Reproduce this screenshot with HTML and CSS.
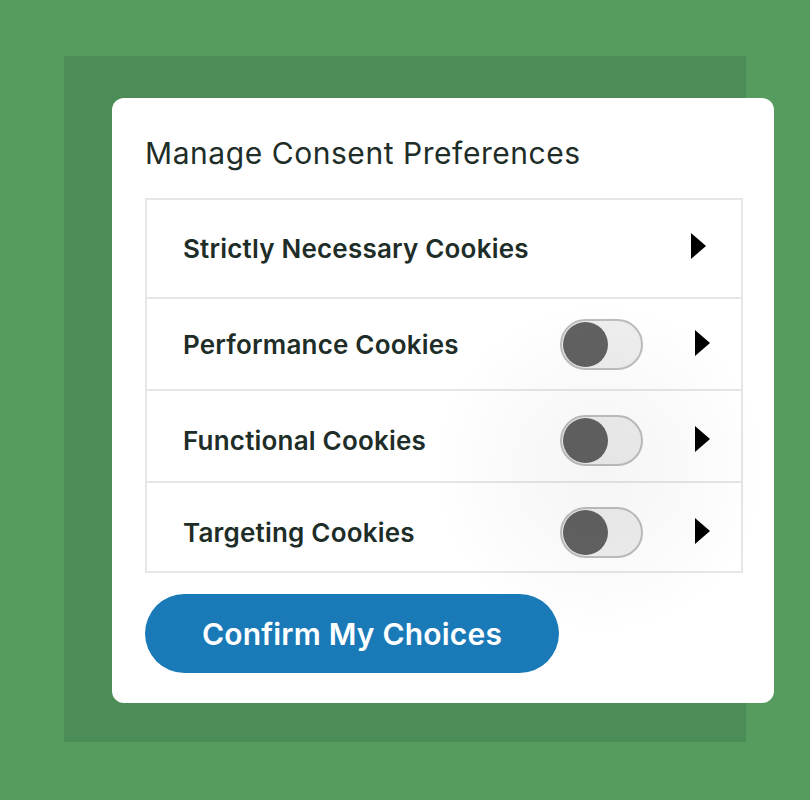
FILE: index.html
```html
<!DOCTYPE html>
<html lang="en">
<head>
<meta charset="utf-8">
<title>Manage Consent Preferences</title>
<link rel="stylesheet" href="styles.css">
</head>
<body>
<div class="backdrop">
  <div class="card">
    <h1 class="title">Manage Consent Preferences</h1>
    <div class="list">
      <div class="row row-first">
        <span class="label">Strictly Necessary Cookies</span>
        <span class="arrow arrow-first"></span>
      </div>
      <div class="row">
        <span class="label">Performance Cookies</span>
        <span class="toggle"><span class="knob"></span></span>
        <span class="arrow"></span>
      </div>
      <div class="row row-third">
        <span class="label">Functional Cookies</span>
        <span class="toggle"><span class="knob"></span></span>
        <span class="arrow"></span>
      </div>
      <div class="row row-last">
        <span class="label">Targeting Cookies</span>
        <span class="toggle"><span class="knob"></span></span>
        <span class="arrow"></span>
      </div>
    </div>
    <button class="confirm">Confirm My Choices</button>
    <div class="glow"></div>
  </div>
</div>
</body>
</html>
```

FILE: styles.css
```css
html, body {
  margin: 0;
  padding: 0;
}
body {
  background: #569c5e;
  width: 810px;
  height: 800px;
  overflow: hidden;
  font-family: Inter, "Liberation Sans", sans-serif;
}
.backdrop {
  margin: 56px 0 0 64px;
  width: 682px;
  height: 686px;
  background: #4c8d57;
  padding: 42px 0 0 48px;
  box-sizing: border-box;
}
.card {
  position: relative;
  width: 662px;
  height: 605px;
  background: #ffffff;
  border-radius: 12px;
  box-sizing: border-box;
  padding: 0 31px 0 33px;
  display: flex;
  flex-direction: column;
  overflow: hidden;
}
.title {
  margin: 0;
  padding-top: 37px;
  height: 100px;
  box-sizing: border-box;
  font-size: 30px;
  font-weight: 400;
  color: #1e2d28;
  line-height: 36px;
  letter-spacing: 0.55px;
  flex-shrink: 0;
}
.list {
  border: 2px solid #e6e6e6;
  display: flex;
  flex-direction: column;
  flex-shrink: 0;
}
.row {
  display: flex;
  align-items: center;
  height: 92px;
  box-sizing: border-box;
  padding: 0 31px 0 36px;
  border-top: 2px solid #e6e6e6;
}
.row-first {
  border-top: none;
  height: 97px;
  padding-right: 35px;
}
.row-third {
  padding-top: 8px;
}
.row-last {
  height: 90px;
  padding-top: 10px;
}
.label {
  flex: 1;
  font-size: 26px;
  font-weight: 600;
  color: #1e2d28;
  letter-spacing: 0.2px;
}
.arrow {
  width: 0;
  height: 0;
  border-top: 13px solid transparent;
  border-bottom: 13px solid transparent;
  border-left: 15px solid #000000;
  margin-top: -2px;
}
.arrow-first {
  margin-top: -6px;
}
.toggle {
  width: 83px;
  height: 51px;
  box-sizing: border-box;
  border: 2px solid #bdbdbd;
  border-radius: 26px;
  background: #eeeeee;
  margin-right: 52px;
  display: flex;
  align-items: center;
  padding-left: 1px;
}
.knob {
  width: 45px;
  height: 45px;
  border-radius: 50%;
  background: #616161;
}
.confirm {
  margin-top: 21px;
  width: 414px;
  height: 79px;
  flex-shrink: 0;
  border: none;
  border-radius: 40px;
  background: #1a7ab8;
  color: #ffffff;
  font-family: Inter, "Liberation Sans", sans-serif;
  font-size: 30px;
  font-weight: 600;
  letter-spacing: 0.2px;
  padding: 0;
}
.glow {
  position: absolute;
  left: 318px;
  top: 200px;
  width: 340px;
  height: 340px;
  border-radius: 50%;
  background: radial-gradient(circle, rgba(0,0,0,0.04) 0%, rgba(0,0,0,0.018) 40%, rgba(0,0,0,0) 70%);
  pointer-events: none;
}
```
